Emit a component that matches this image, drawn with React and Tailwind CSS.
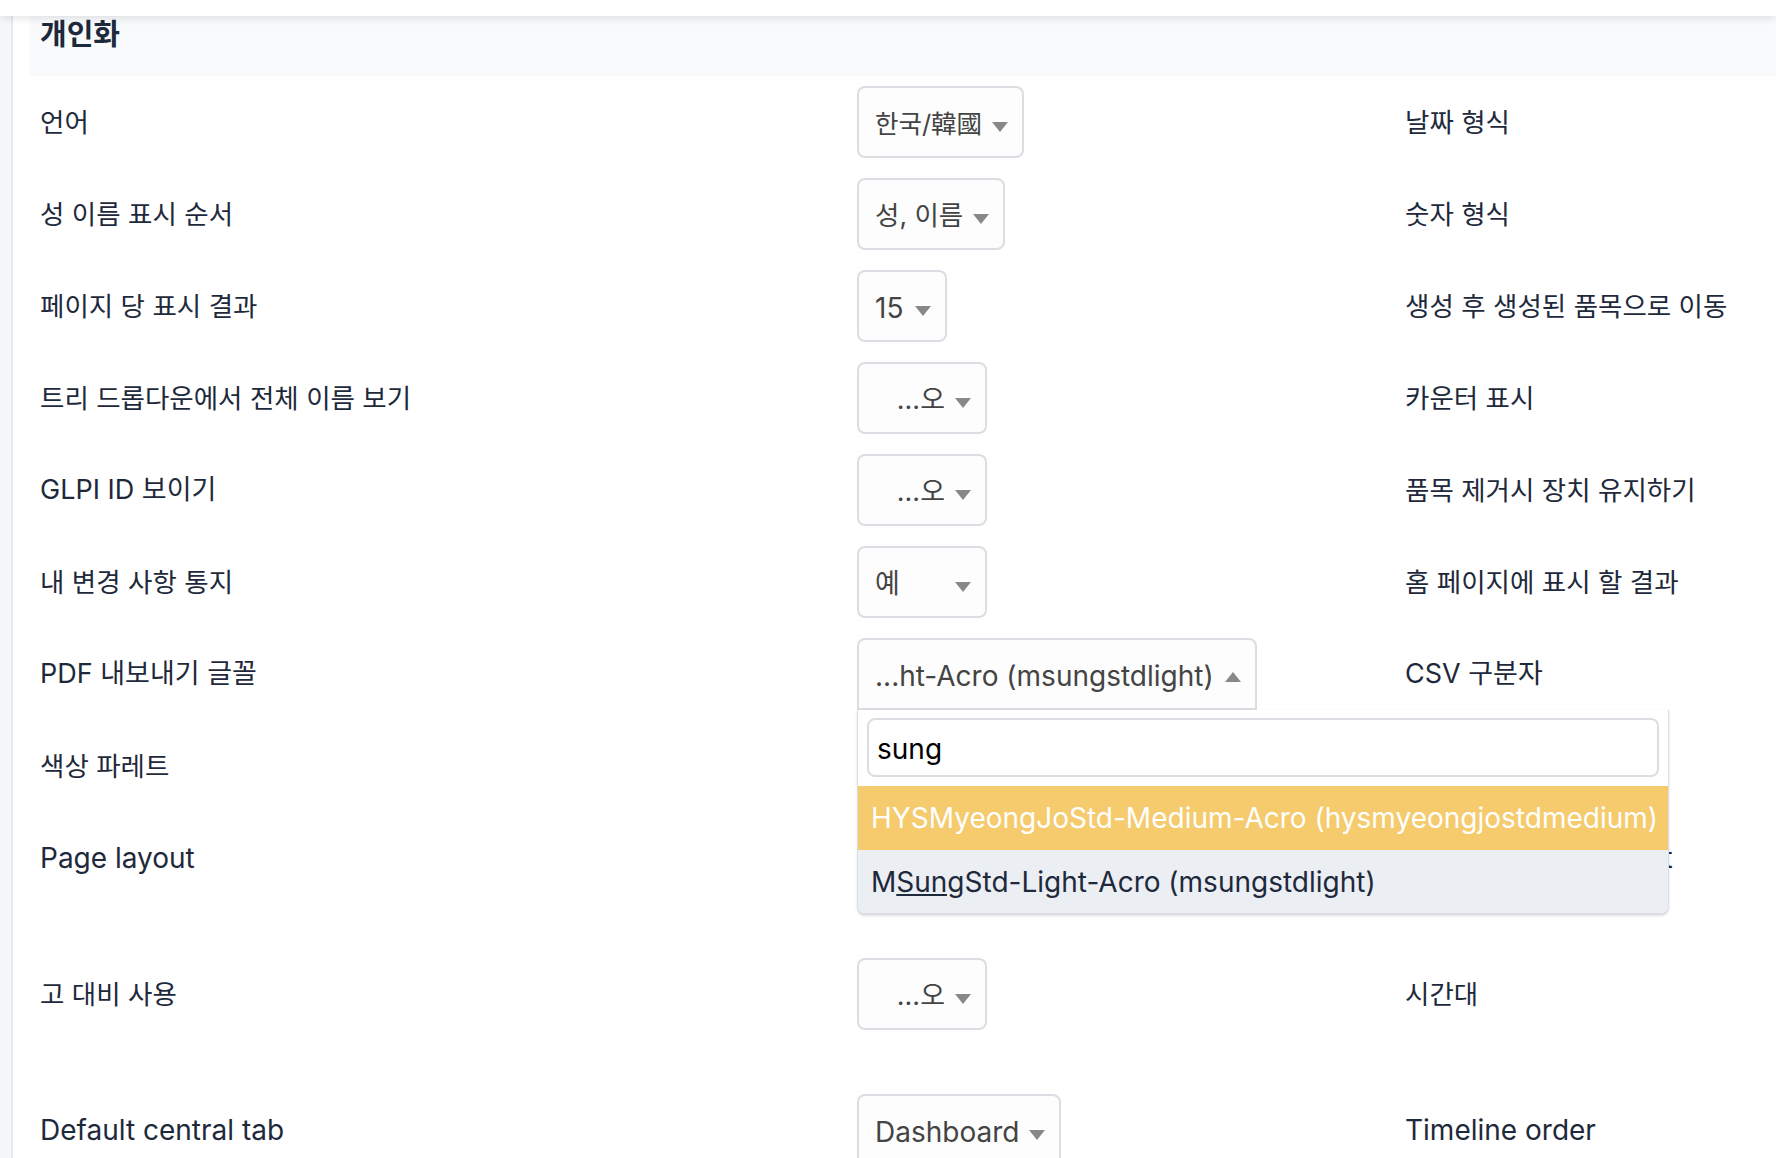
import React from "react";

const ko = "text-[26.5px]";
const en = "text-[28px]";

const rows = [
  { label: "언어", labelSize: ko, value: "한국/韓國", valueSize: "text-[25.5px]", width: "w-[167px]", right: "날짜 형식", rightSize: ko },
  { label: "성 이름 표시 순서", labelSize: ko, value: "성, 이름", valueSize: ko, width: "w-[148px]", right: "숫자 형식", rightSize: ko },
  { label: "페이지 당 표시 결과", labelSize: ko, value: "15", valueSize: en, width: "w-[90px]", right: "생성 후 생성된 품목으로 이동", rightSize: ko },
  { label: "트리 드롭다운에서 전체 이름 보기", labelSize: ko, value: "...오", width: "w-[130px]", end: true, right: "카운터 표시", rightSize: ko },
  { label: "GLPI ID 보이기", value: "...오", width: "w-[130px]", end: true, right: "품목 제거시 장치 유지하기", rightSize: ko },
  { label: "내 변경 사항 통지", labelSize: ko, value: "예", width: "w-[130px]", right: "홈 페이지에 표시 할 결과", rightSize: ko },
  { label: "PDF 내보내기 글꼴", value: "...ht-Acro (msungstdlight)", valueSize: en, width: "w-[400px]", open: true, right: "CSV 구분자" },
  { label: "색상 파레트", labelSize: ko },
  { label: "Page layout", labelSize: en, tall: true, right: "Rich text field layout", rightSize: en },
  { label: "고 대비 사용", labelSize: ko, value: "...오", width: "w-[130px]", end: true, tall: true, right: "시간대", rightSize: ko },
  { label: "Default central tab", labelSize: en, value: "Dashboard", valueSize: en, width: "w-[204px]", right: "Timeline order", rightSize: en },
];

const Dropdown = () => (
  <div className="absolute -left-[2px] top-[calc(100%+2px)] z-10 w-[812px] h-[205px] bg-white border-x border-b-2 border-[#dcdde2] rounded-b-lg shadow-sm overflow-hidden text-[28px]">
    <div className="h-[76px] pt-[8px] pl-[9px] pr-[9px]">
      <div className="h-[59px] border-2 border-[#dcdde2] rounded-lg pl-[8px] leading-[58px] text-black bg-white">sung</div>
    </div>
    <div className="h-[64px] bg-[#f5cb6e] text-white pl-[13px] leading-[64px] whitespace-nowrap">
      HYSMyeongJoStd-Medium-Acro (hysmyeongjostdmedium)
    </div>
    <div className="h-[64px] bg-[#ebeef3] text-[#1e293b] pl-[13px] leading-[64px] whitespace-nowrap">
      M<span className="underline">Sung</span>Std-Light-Acro (msungstdlight)
    </div>
  </div>
);

const Select = ({ value, valueSize, width, end, open }) => (
  <div
    className={`relative flex items-center h-[72px] pl-[16px] pr-[14px] border-2 border-[#dcdde2] bg-[#fdfdfd] text-[#444444] whitespace-nowrap ${width} ${
      open ? "rounded-t-lg" : "rounded-lg"
    }`}
  >
    <span className={`pt-[4px] ${end ? "ml-auto" : ""} ${valueSize || ""}`}>{value}</span>
    <span
      className={`w-0 h-0 border-x-[8px] border-x-transparent ml-[10px] shrink-0 ${
        end ? "" : "ml-auto"
      } ${open ? "border-b-[10px] border-b-[#888888] mt-[6px]" : "border-t-[10px] border-t-[#888888] mt-[10px]"}`}
    />
    {open && <Dropdown />}
  </div>
);

const Row = ({ label, labelSize, value, valueSize, width, end, open, tall, right, rightSize }) => (
  <div className={`flex items-start pl-[10px] ${tall ? "h-[136px]" : "h-[92px]"}`}>
    <div className={`w-[817px] pt-[28px] leading-9 whitespace-nowrap ${labelSize || ""}`}>{label}</div>
    <div className="w-[548px] pt-[10px]">
      {value && <Select value={value} valueSize={valueSize} width={width} end={end} open={open} />}
    </div>
    <div className={`pt-[28px] leading-9 whitespace-nowrap ${rightSize || ""}`}>{right}</div>
  </div>
);

export default function App() {
  return (
    <div className="relative h-screen overflow-hidden bg-white text-[27px] text-[#1e293b] font-[Inter,'Noto_Sans_CJK_KR',sans-serif]">
      <div className="relative z-20 h-4 bg-white shadow-[0_2px_8px_rgba(0,0,0,0.12)]" />
      <div className="flex h-full">
        <div className="w-[13px] shrink-0 bg-[#f5f7fb] border-r-2 border-[#e8e9ee]" />
        <div className="flex-1 min-w-0 pl-[17px]">
          <div className="h-[60px] bg-[#f9fafc] pl-[10px] pt-[2px] leading-[34px] text-[29px] font-bold">개인화</div>
          {rows.map((row) => (
            <Row key={row.label} {...row} />
          ))}
        </div>
      </div>
    </div>
  );
}
